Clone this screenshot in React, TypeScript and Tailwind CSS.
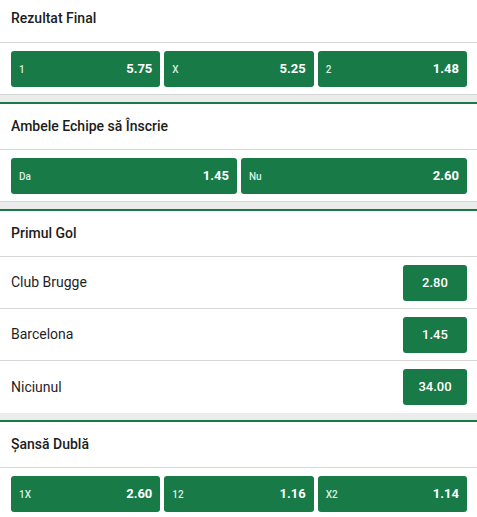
import React from "react";

type Odd = { label: string; value: string };

const GREEN = "bg-[#187a47]";

const OddButton: React.FC<Odd> = ({ label, value }) => (
  <button
    type="button"
    className={`${GREEN} h-9 rounded-[3px] px-[8px] flex items-center justify-between text-white`}
  >
    <span className="text-[10px] font-medium text-[#d9efe2]">{label}</span>
    <span className="text-[13px] font-bold">{value}</span>
  </button>
);

const Gap = () => <div className="h-[7px] bg-[#ececec]" />;

const SectionHeader: React.FC<{ title: string; first?: boolean }> = ({
  title,
  first,
}) => (
  <div
    className={`flex items-center px-[11px] border-b border-[#d6d6d6] text-[14px] font-medium text-[#1c1c1c] ${
      first ? "h-[43px] pb-[5px]" : "h-[48px] border-t-2 border-t-[#187a47]"
    }`}
  >
    {title}
  </div>
);

const GridMarket: React.FC<{ title: string; odds: Odd[]; first?: boolean }> = ({
  title,
  odds,
  first,
}) => (
  <section className="bg-white">
    <SectionHeader title={title} first={first} />
    <div
      className={`grid gap-1 pl-[11px] pr-[10px] pt-[8px] pb-[7px] border-b border-[#d6d6d6] ${
        odds.length === 3 ? "grid-cols-3" : "grid-cols-2"
      }`}
    >
      {odds.map((o) => (
        <OddButton key={o.label} {...o} />
      ))}
    </div>
  </section>
);

const primulGol: Odd[] = [
  { label: "Club Brugge", value: "2.80" },
  { label: "Barcelona", value: "1.45" },
  { label: "Niciunul", value: "34.00" },
];

export default function App() {
  return (
    <div
      className="w-[477px] bg-white"
      style={{ fontFamily: "Roboto, 'Liberation Sans', sans-serif" }}
    >
      <GridMarket
        first
        title="Rezultat Final"
        odds={[
          { label: "1", value: "5.75" },
          { label: "X", value: "5.25" },
          { label: "2", value: "1.48" },
        ]}
      />
      <Gap />
      <GridMarket
        title="Ambele Echipe să Înscrie"
        odds={[
          { label: "Da", value: "1.45" },
          { label: "Nu", value: "2.60" },
        ]}
      />
      <Gap />
      <section className="bg-white">
        <SectionHeader title="Primul Gol" />
        {primulGol.map((r, i) => (
          <div
            key={r.label}
            className={`h-[52px] flex items-center justify-between pl-[11px] pr-[10px] ${
              i < primulGol.length - 1 ? "border-b border-[#d6d6d6]" : ""
            }`}
          >
            <span className="text-[14px] text-[#1f1f1f]">{r.label}</span>
            <button
              type="button"
              className={`${GREEN} w-16 h-9 rounded-[3px] text-white text-[13px] font-medium`}
            >
              {r.value}
            </button>
          </div>
        ))}
      </section>
      <Gap />
      <GridMarket
        title="Șansă Dublă"
        odds={[
          { label: "1X", value: "2.60" },
          { label: "12", value: "1.16" },
          { label: "X2", value: "1.14" },
        ]}
      />
    </div>
  );
}
